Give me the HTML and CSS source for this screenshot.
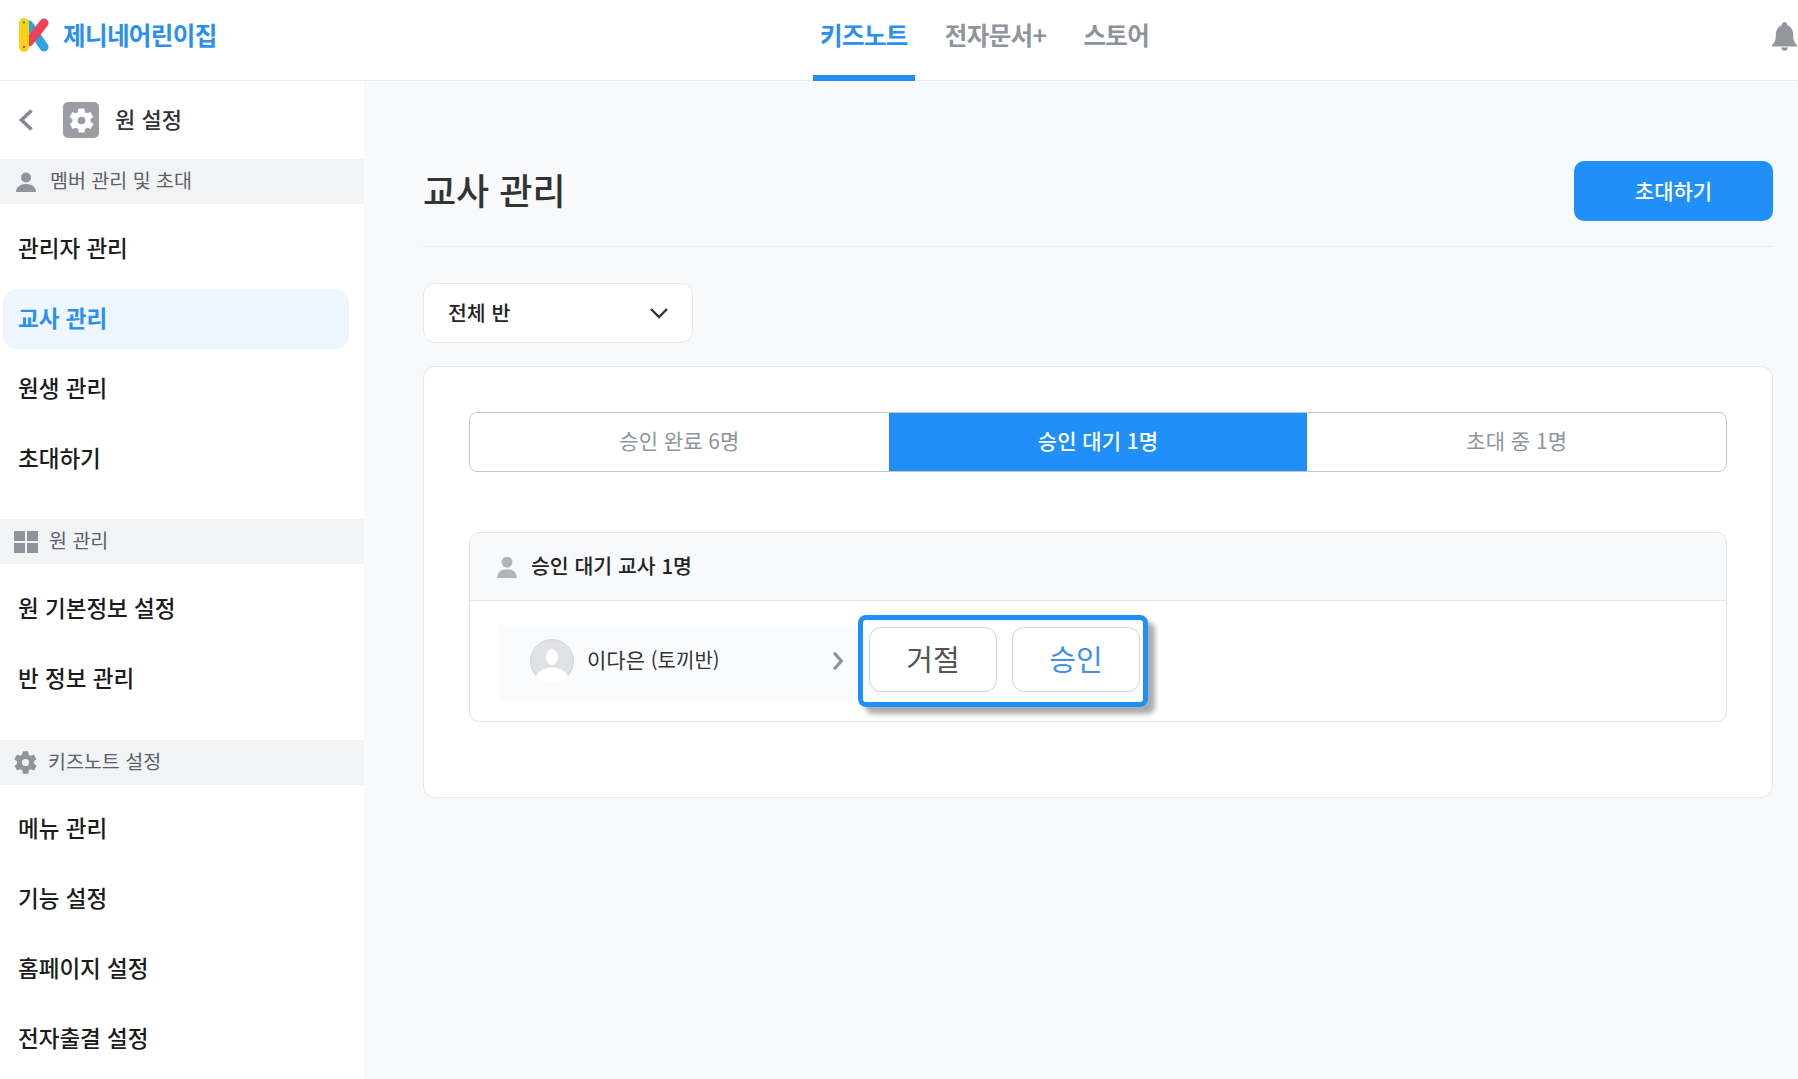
FILE: index.html
```html
<!DOCTYPE html>
<html lang="ko">
<head>
  <meta charset="UTF-8" />
  <meta name="viewport" content="width=device-width, initial-scale=1" />
  <title>교사 관리</title>
  <link rel="stylesheet" href="styles.css">
</head>
<body>
  <header class="topbar">
    <div class="brand">
      <svg class="brand-logo" viewBox="0 0 30 34" width="30" height="34">
        <path d="M10 7 L25 29" stroke="#2aa5e0" stroke-width="9" stroke-linecap="round" fill="none"/>
        <path d="M10 24 L25 5" stroke="#f0405a" stroke-width="9" stroke-linecap="round" fill="none"/>
        <rect x="0" y="0" width="10" height="34" rx="5" fill="#fcd116"/>
        <circle cx="5" cy="4.500" r="1.200" fill="#1fa98f"/>
        <circle cx="5" cy="29" r="1.200" fill="#e8453c"/>
      </svg>
      <span class="brand-name">제니네어린이집</span>
    </div>
    <nav class="topnav">
      <a class="topnav-item active">키즈노트</a>
      <a class="topnav-item">전자문서+</a>
      <a class="topnav-item">스토어</a>
    </nav>
    <svg class="bell" viewBox="0 0 26 30" width="25" height="29">
      <path d="M13 0c1.600 0 2.700 1.200 2.700 2.800v.6C20 4.700 22 8.500 22 13c0 5 .8 8 4 11v1.500H0V24c3.200-3 4-6 4-11 0-4.500 2-8.300 6.300-9.600v-.6C10.300 1.200 11.400 0 13 0z" fill="#92969d"/>
      <path d="M9.500 26.500h7c0 2-1.500 3.300-3.500 3.300s-3.500-1.300-3.500-3.300z" fill="#92969d"/>
    </svg>
  </header>

  <div class="layout">
    <aside class="sidebar">
      <div class="side-head">
        <svg class="side-back" viewBox="0 0 16 24" width="16" height="24">
          <path d="M13.500 2.500 L3.500 12 L13.500 21.500" stroke="#85898f" stroke-width="3.600" fill="none"/>
        </svg>
        <span class="gear-box">
          <svg viewBox="0 0 24 24" width="29" height="29"><path fill="#fff" fill-rule="evenodd" d="M19.400 13c.1-.3.100-.7.100-1s0-.7-.1-1l2.100-1.600c.2-.2.200-.4.100-.6l-2-3.500c-.1-.2-.4-.3-.6-.2l-2.500 1c-.5-.4-1.100-.7-1.700-1l-.4-2.600c0-.3-.2-.5-.5-.5h-4c-.3 0-.5.200-.5.500l-.4 2.600c-.6.300-1.200.6-1.700 1l-2.500-1c-.2-.1-.5 0-.6.200l-2 3.500c-.1.200-.1.400.1.600L4.600 11c-.1.300-.1.700-.1 1s0 .7.100 1l-2.100 1.600c-.2.200-.2.400-.1.600l2 3.500c.1.200.4.300.6.200l2.500-1c.5.400 1.100.7 1.700 1l.4 2.600c0 .3.200.5.500.5h4c.3 0 .5-.2.500-.5l.4-2.600c.6-.3 1.200-.6 1.700-1l2.500 1c.2.100.5 0 .6-.2l2-3.500c.1-.2.100-.4-.1-.6L19.400 13zM12 15.200a3.200 3.200 0 1 1 0-6.400 3.200 3.200 0 0 1 0 6.400z"/></svg>
        </span>
        <span class="side-title">원 설정</span>
      </div>

      <div class="side-section">
        <svg class="section-icon person" viewBox="0 0 22 22" width="22" height="22"><circle cx="11" cy="6.500" r="5" fill="#8f949c"/><path d="M1 21c0-5 4-8 10-8s10 3 10 8z" fill="#8f949c"/></svg>
        <span>멤버 관리 및 초대</span>
      </div>
      <ul class="side-list">
        <li class="side-item">관리자 관리</li>
        <li class="side-item active">교사 관리</li>
        <li class="side-item">원생 관리</li>
        <li class="side-item">초대하기</li>
      </ul>

      <div class="side-section">
        <svg class="section-icon grid" viewBox="0 0 24 24" width="24" height="24"><rect x="0" y="1" width="11" height="10" fill="#8f949c"/><rect x="13" y="1" width="11" height="10" fill="#8f949c"/><rect x="0" y="13" width="11" height="10" fill="#8f949c"/><rect x="13" y="13" width="11" height="10" fill="#8f949c"/></svg>
        <span>원 관리</span>
      </div>
      <ul class="side-list short">
        <li class="side-item">원 기본정보 설정</li>
        <li class="side-item">반 정보 관리</li>
      </ul>

      <div class="side-section">
        <svg class="section-icon gear" viewBox="0 0 24 24" width="27" height="27"><path fill="#8f949c" fill-rule="evenodd" d="M19.400 13c.1-.3.100-.7.100-1s0-.7-.1-1l2.100-1.600c.2-.2.200-.4.100-.6l-2-3.500c-.1-.2-.4-.3-.6-.2l-2.500 1c-.5-.4-1.100-.7-1.700-1l-.4-2.600c0-.3-.2-.5-.5-.5h-4c-.3 0-.5.200-.5.500l-.4 2.600c-.6.300-1.200.6-1.700 1l-2.500-1c-.2-.1-.5 0-.6.200l-2 3.500c-.1.200-.1.400.1.600L4.600 11c-.1.300-.1.700-.1 1s0 .7.100 1l-2.100 1.600c-.2.200-.2.400-.1.600l2 3.500c.1.200.4.300.6.200l2.500-1c.5.400 1.100.7 1.700 1l.4 2.600c0 .3.200.5.500.5h4c.3 0 .5-.2.500-.5l.4-2.600c.6-.3 1.200-.6 1.700-1l2.500 1c.2.100.5 0 .6-.2l2-3.500c.1-.2.100-.4-.1-.6L19.400 13zM12 15.200a3.200 3.200 0 1 1 0-6.400 3.200 3.200 0 0 1 0 6.400z"/></svg>
        <span>키즈노트 설정</span>
      </div>
      <ul class="side-list">
        <li class="side-item">메뉴 관리</li>
        <li class="side-item">기능 설정</li>
        <li class="side-item">홈페이지 설정</li>
        <li class="side-item">전자출결 설정</li>
      </ul>
    </aside>

    <main class="content">
      <div class="page-head">
        <h1 class="page-title">교사 관리</h1>
        <button class="invite-btn">초대하기</button>
      </div>

      <div class="class-select">
        <span>전체 반</span>
        <svg viewBox="0 0 20 12" width="20" height="12"><path d="M2 2 L10 10 L18 2" stroke="#333" stroke-width="2.400" fill="none"/></svg>
      </div>

      <section class="card">
        <div class="tabs">
          <div class="tab">승인 완료 6명</div>
          <div class="tab active">승인 대기 1명</div>
          <div class="tab">초대 중 1명</div>
        </div>

        <div class="panel">
          <div class="panel-head">
            <svg viewBox="0 0 22 22" width="24" height="24"><circle cx="11" cy="6.500" r="5" fill="#b0b4ba"/><path d="M2 21c0-5 3.500-8 9-8s9 3 9 8z" fill="#b0b4ba"/></svg>
            <span>승인 대기 교사 1명</span>
          </div>
          <div class="panel-row">
            <div class="teacher">
              <span class="avatar">
                <svg viewBox="0 0 44 44" width="44" height="44"><circle cx="22" cy="22" r="21.500" fill="#dfe1e5" stroke="#d2d4d8"/><ellipse cx="22" cy="18" rx="6" ry="8" fill="#fff"/><path d="M6 38c2-7 9-9.500 16-9.500S36 31 38 38c-4 4-10 6-16 6S10 42 6 38z" fill="#fff"/></svg>
              </span>
              <span class="teacher-name">이다은 <small>(토끼반)</small></span>
              <svg class="teacher-arrow" viewBox="0 0 10 18" width="12" height="20"><path d="M1.500 1.500 L8 9 L1.500 16.500" stroke="#8f949c" stroke-width="2.800" fill="none"/></svg>
            </div>
            <div class="action-box">
              <button class="action-btn">거절</button>
              <button class="action-btn approve">승인</button>
            </div>
          </div>
        </div>
      </section>
    </main>
  </div>
</body>
</html>
```

FILE: styles.css
```css
* {
  box-sizing: border-box;
}

body {
  margin: 0;
  font-family: "Noto Sans CJK KR", "Noto Sans", sans-serif;
  color: #222;
  background-color: #f8f9fb;
  height: 1079px;
  overflow: hidden;
}

.topbar {
  position: relative;
  height: 81px;
  background-color: #fff;
  border-bottom: 1px solid #e9ebee;
  display: flex;
  align-items: center;
  padding-left: 19px;
}

.brand {
  display: flex;
  align-items: center;
  gap: 14px;
  width: 794px;
  margin-bottom: 11px;
}

.brand-name {
  font-size: 24.5px;
  font-weight: 700;
  color: #2b8ff0;
  letter-spacing: -0.6px;
}

.topnav {
  display: flex;
  height: 80px;
}

.topnav-item {
  display: flex;
  align-items: center;
  justify-content: center;
  height: 81px;
  padding: 0 7px 12px;
  margin-right: 23px;
  font-size: 24.5px;
  font-weight: 700;
  color: #8f949c;
  letter-spacing: -0.6px;
}

.topnav-item.active {
  color: #2b8ff0;
  border-bottom: 6px solid #2090f8;
  padding-bottom: 6px;
}

.bell {
  position: absolute;
  right: 1px;
  top: 22px;
}

.layout {
  display: flex;
  height: 998px;
}

.sidebar {
  width: 364px;
  flex-shrink: 0;
  background-color: #fff;
}

.side-head {
  display: flex;
  align-items: center;
  height: 78px;
  padding-left: 18px;
}

.gear-box {
  display: flex;
  align-items: center;
  justify-content: center;
  width: 36px;
  height: 36px;
  margin-left: 29px;
  border-radius: 5px;
  background-color: #9a9da2;
}

.side-title {
  margin-left: 16px;
  padding-bottom: 4px;
  font-size: 22px;
  font-weight: 500;
  color: #333;
}

.side-section {
  display: flex;
  align-items: center;
  gap: 13px;
  height: 45px;
  padding: 0 0 0 14px;
  background-color: #f1f3f5;
  font-size: 19.5px;
  color: #5c6067;
}

.side-section span {
  padding-bottom: 5px;
}

.section-icon.person {
  margin-left: 1px;
}

.section-icon.grid {
  margin-right: -2px;
}

.section-icon.gear {
  margin-left: -2px;
  margin-right: -4px;
}

.side-list {
  list-style: none;
  margin: 0;
  padding: 15px 0 20px;
}

.side-list.short {
  padding-bottom: 21px;
}

.side-list:last-child {
  padding-top: 14px;
}

.side-item {
  display: flex;
  align-items: center;
  height: 60px;
  margin: 0 15px 10px 3px;
  padding: 0 0 4px 15px;
  border-radius: 14px;
  font-size: 22.5px;
  font-weight: 500;
  color: #1b1b1b;
}

.side-item.active {
  background-color: #eef6ff;
  color: #2b8ff0;
  font-weight: 700;
}

.content {
  flex: 1;
  padding: 0 25px 0 59px;
}

.page-head {
  display: flex;
  align-items: center;
  justify-content: space-between;
  height: 166px;
  padding-top: 54px;
  border-bottom: 1px solid #ebedf0;
}

.page-title {
  margin: 0 0 4px;
  font-size: 36px;
  font-weight: 500;
  color: #333;
}

.invite-btn {
  width: 199px;
  height: 60px;
  padding: 0 0 2px;
  border: none;
  border-radius: 10px;
  background-color: #2090f8;
  color: #fff;
  font-family: inherit;
  font-size: 21px;
  font-weight: 500;
}

.class-select {
  display: flex;
  align-items: center;
  justify-content: space-between;
  width: 270px;
  height: 60px;
  margin-top: 36px;
  padding: 0 23px 0 24px;
  border: 1px solid #e6e8eb;
  border-radius: 12px;
  background-color: #fff;
  font-size: 20.5px;
  font-weight: 500;
}

.class-select span {
  padding-bottom: 2px;
}

.card {
  height: 432px;
  margin-top: 23px;
  padding: 45px;
  border: 1px solid #e6e8eb;
  border-radius: 12px;
  background-color: #fff;
}

.tabs {
  display: flex;
  height: 60px;
  border: 1px solid #c4c6ca;
  border-radius: 8px;
  overflow: hidden;
}

.tab {
  flex: 1;
  display: flex;
  align-items: center;
  justify-content: center;
  padding-bottom: 5px;
  font-size: 21px;
  color: #909499;
}

.tab.active {
  margin: -1px 0;
  background-color: #2090f8;
  color: #fff;
  font-weight: 500;
}

.panel {
  margin-top: 60px;
  height: 190px;
  border: 1px solid #e3e5e8;
  border-radius: 10px;
  overflow: hidden;
}

.panel-head {
  display: flex;
  align-items: center;
  gap: 12px;
  height: 68px;
  padding-left: 25px;
  background-color: #f8f9fb;
  border-bottom: 1px solid #e3e5e8;
  font-size: 20.5px;
  font-weight: 500;
}

.panel-head span {
  padding-bottom: 4px;
}

.panel-row {
  display: flex;
  align-items: flex-start;
  padding: 14px 0 0 29px;
}

.teacher {
  display: flex;
  align-items: center;
  width: 359px;
  height: 76px;
  margin-top: 10px;
  padding: 0 14px 5px 31px;
  background-color: #fafbfc;
}

.avatar {
  display: flex;
  width: 44px;
  height: 44px;
}

.teacher-name {
  margin-left: 13px;
  padding-bottom: 4px;
  font-size: 21px;
  color: #333;
}

.teacher-name small {
  font-size: 20px;
}

.teacher-arrow {
  margin-left: auto;
}

.action-box {
  display: flex;
  gap: 15px;
  padding: 7px 2px 6px 6px;
  width: 290px;
  height: 92px;
  border: 5px solid #2090f8;
  border-radius: 8px;
  background-color: #fff;
  box-shadow: 7px 7px 5px rgba(0, 0, 0, 0.33);
}

.action-btn {
  width: 128px;
  height: 65px;
  padding: 0 0 4px;
  border: 1px solid #d0d2d5;
  border-radius: 12px;
  background-color: #fff;
  font-family: inherit;
  font-size: 29px;
  color: #555;
}

.action-btn.approve {
  color: #3f8fe8;
}
```
